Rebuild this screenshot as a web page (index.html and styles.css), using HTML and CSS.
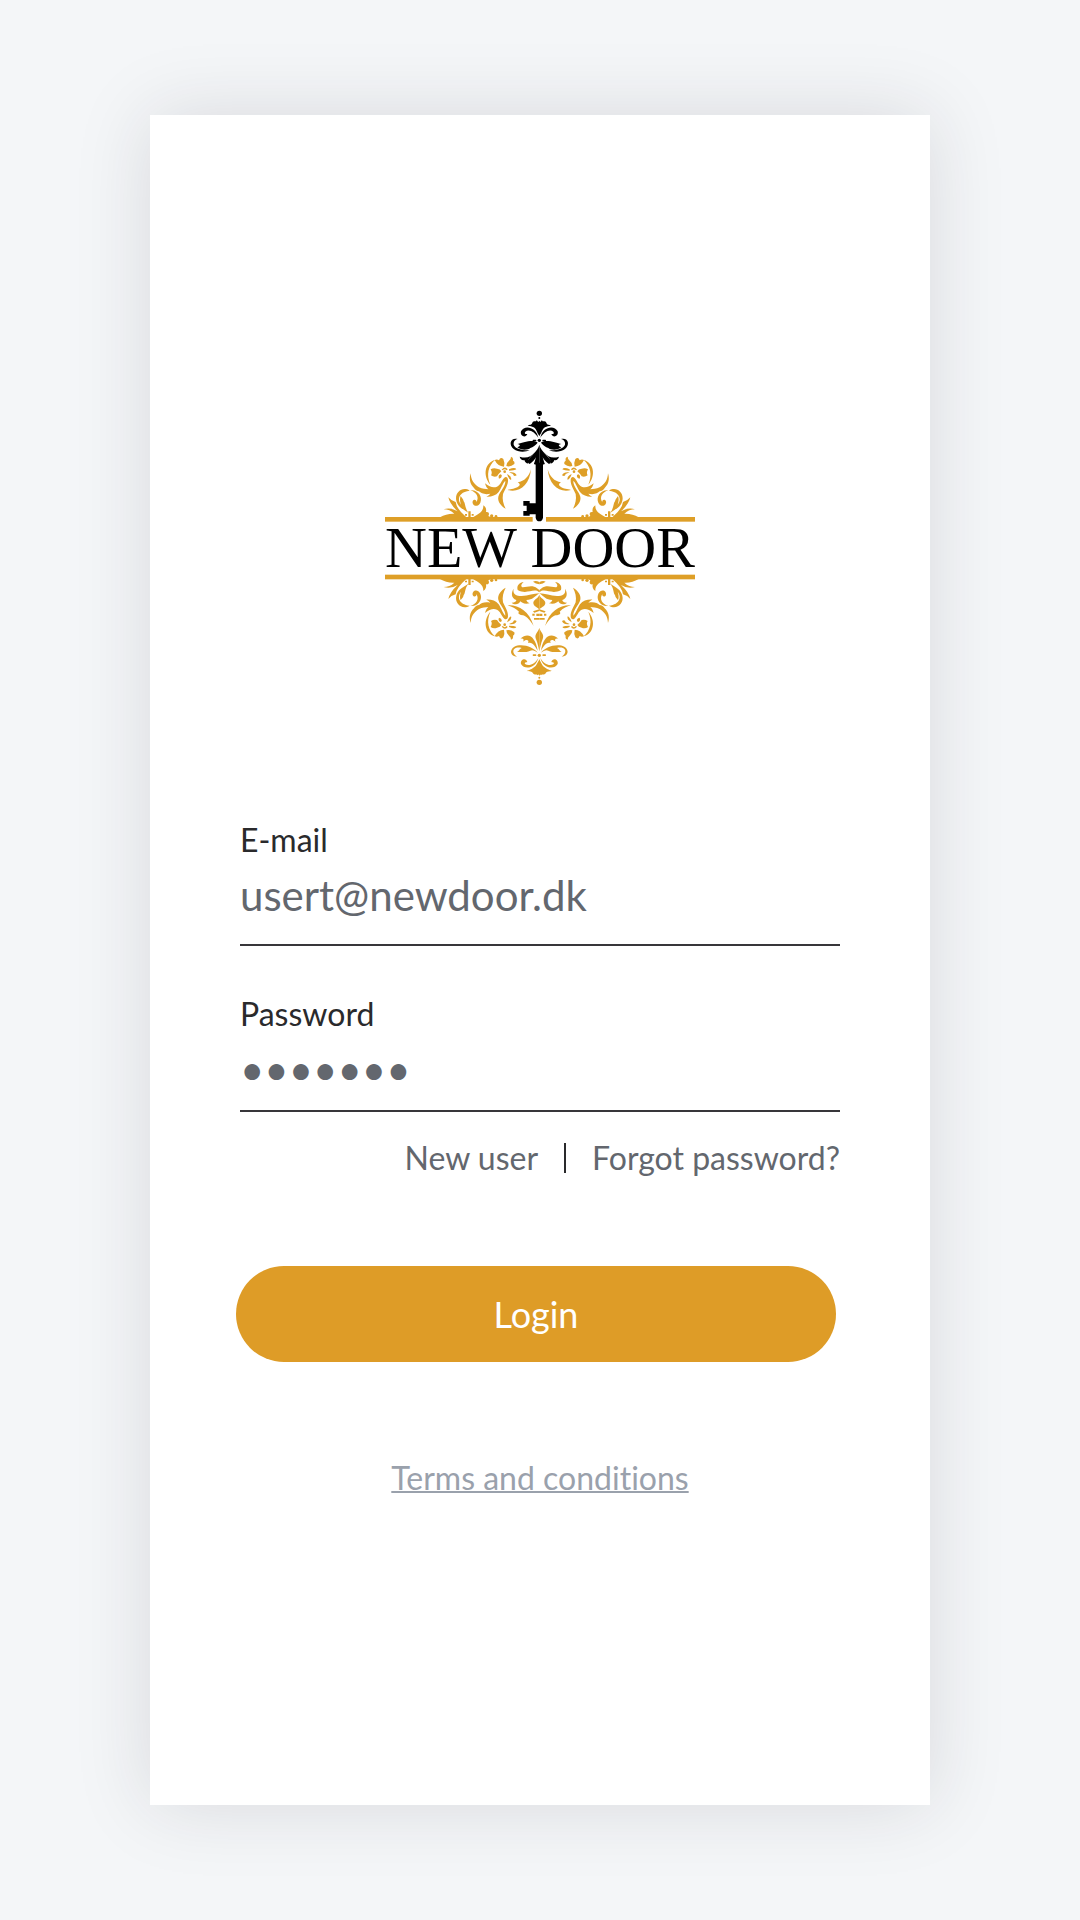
FILE: index.html
```html
<!DOCTYPE html>
<html lang="en">
<head>
    <meta charset="utf-8">
    <meta name="viewport" content="width=device-width, initial-scale=1">
    <title>New Door - Login</title>
    <link rel="stylesheet" href="styles.css">
</head>
<body>
    <main class="card">
        <svg class="logo" viewBox="0 0 990 900" role="img" aria-label="New Door">
            <defs>
                <!-- left half of the corner scrolls and flower -->
                <g id="scroll">
                    <path d="M195 352 Q214 340 238 341 Q224 328 206 328 Q226 321 248 334 Q224 312 220 292 Q228 302 242 306 Q244 326 274 352 Z"/>
                    <path d="M284 272 C262 258 238 278 244 302 C248 320 262 326 280 338 C268 322 272 310 266 304 C265 296 260 294 257 288 C253 298 256 308 258 314 C246 300 250 276 284 272 Z"/>
                    <path d="M286 271 C308 268 324 290 316 308 C308 324 290 318 293 304 C297 296 306 300 304 307 C314 292 304 276 286 271 Z"/>
                    <path d="M280 334h7v18h-7z M270 342h6v5h-6z M290 342h6v5h-6z"/>
                    <path d="M294 352 C310 342 326 336 325 316 C332 320 335 328 333 336 C342 334 344 342 340 348 L348 352 Z"/>
                    <circle cx="350" cy="348" r="5"/>
                    <circle cx="363" cy="349" r="4"/>
                    <path d="M287 220 C288 240 296 252 312 262 C322 267 332 266 340 268 C333 262 332 256 330 250 C344 262 356 264 366 260 C376 256 380 240 388 233 C392 229 399 231 399 240 C400 254 390 268 384 282 C381 298 385 312 392 326 C378 318 367 304 370 290 C374 274 392 260 391 242 C384 248 379 264 371 276 C362 287 348 291 334 290 C341 287 343 284 346 281 C330 285 318 280 312 274 C306 274 300 269 297 264 C284 252 282 236 287 220 Z"/>
                    <path d="M360 180 C330 188 322 226 346 254 C333 224 340 198 360 180 Z"/>
                    <path d="M359 180 Q366 177 372 181 Q376 169 385 177 Q390 188 387 200 Q368 199 359 180 Z"/>
                    <path d="M402 182 Q408 178 408 170 Q416 172 414 182 Q420 184 418 192 Q406 202 394 198 Q394 188 402 182 Z"/>
                    <path d="M347 208 Q356 202 366 206 Q376 207 379 214 Q370 222 366 229 Q356 232 348 226 Q353 219 347 208 Z"/>
                    <path d="M376 223 q-8 4 -4 13 q10 -2 8 -11 z M402 208 Q420 200 424 208 Q418 212 402 212 Z M402 217 Q420 214 425 226 Q416 232 414 222 Z M396 222 Q412 230 408 240 Q400 236 396 222 Z"/>
                    <path d="M380 209 q10 -12 18 -1 l-3 3 q-6 -7 -12 0 z"/>
                    <circle cx="389" cy="215" r="4"/>
                </g>
                <path id="sweep" d="M468 208 C462 230 448 244 428 247 C435 251 436 255 431 259 C420 268 408 266 398 270 C432 280 464 256 468 208 Z"/>
                <!-- left half of the key head -->
                <g id="crest">
                    <path d="M494 62 L494 108 C484 98 486 88 476 82 C470 78 466 78 458 77 C464 72 470 76 472 68 C476 60 484 68 485 60 C490 68 492 66 494 62 Z"/>
                    <path d="M490 114 C484 80 448 74 438 94 C434 108 452 116 457 102 C452 102 447 102 451 95 C462 86 480 96 490 114 Z"/>
                    <path d="M488 128 C478 116 440 128 427 132 C436 134 438 138 427 142 C438 152 460 150 466 144 C474 141 482 136 488 128 Z"/>
                    <path d="M428 117 C406 112 400 134 416 147 C430 158 452 156 464 151 C440 152 412 144 416 128 C418 120 424 118 428 117 Z"/>
                    <rect x="473" y="119" width="11" height="5" rx="2"/>
                </g>
            </defs>

            <g fill="#de9f27">
                <rect x="30" y="351" width="443" height="14"/>
                <rect x="513" y="351" width="447" height="14"/>
                <rect x="30" y="524" width="930" height="14"/>

                <use href="#scroll"/>
                <use href="#sweep"/>
                <use href="#scroll" transform="matrix(-1 0 0 1 986 0)"/>
                <use href="#sweep" transform="matrix(-1 0 0 1 986 0)"/>
                <use href="#scroll" transform="matrix(1 0 0 -1 0 889)"/>
                <use href="#scroll" transform="matrix(-1 0 0 -1 986 889)"/>

                <g id="heart">
                    <path d="M493 577 C476 562 456 586 428 570 C424 556 434 548 446 546 C436 554 438 562 444 562 C458 560 474 554 486 565 L493 570 Z"/>
                    <path d="M474 545 Q482 541 493 546 L493 553 Q482 552 474 545 Z"/>
                    <path d="M416 566 C412 582 424 588 440 588 C460 588 476 580 493 580 C478 590 474 600 454 600 C456 606 460 608 464 610 C448 614 440 608 436 604 C432 614 418 616 410 608 C420 608 424 604 424 600 C408 594 408 578 416 566 Z"/>
                    <path d="M493 584 C490 596 474 598 475 610 C477 622 488 620 493 630 Z"/>
                    <path d="M398 616 C430 614 462 632 476 678 C462 654 450 648 444 646 C430 644 428 640 432 635 C422 624 410 620 398 616 Z"/>
                    <path d="M474 634 L493 628 L493 633 L478 638 Z M484 641 H493 V648 H484 Z M472 641 h7 v6 h-7 z M477 654 H493 V659 H477 Z"/>
                    <path d="M493 684 C488 700 476 702 484 720 C488 730 490 740 493 754 Z"/>
                    <path d="M488 752 C482 714 462 694 436 716 C446 714 448 720 444 725 C454 716 464 720 459 729 C472 724 480 738 488 752 Z"/>
                </g>
                <use href="#heart" transform="matrix(-1 0 0 1 986 0)"/>
                <g id="foot">
                    <path d="M488 758 C478 742 440 728 418 740 C402 750 406 768 426 770 C412 762 412 748 422 744 C428 742 434 742 440 744 C432 748 432 754 426 756 C438 756 454 758 466 752 C472 748 480 752 488 758 Z"/>
                    <path d="M490 774 C482 806 448 810 438 792 C435 778 453 772 457 786 C452 788 448 786 450 792 C462 800 480 792 490 774 Z"/>
                    <path d="M494 778 C486 788 486 798 474 804 C468 808 464 810 456 812 C464 816 470 812 474 820 C480 828 486 820 488 826 C492 820 492 826 494 828 Z"/>
                    <rect x="473" y="763" width="11" height="5" rx="2"/>
                </g>
                <use href="#foot" transform="matrix(-1 0 0 1 986 0)"/>
                <circle cx="493" cy="766" r="5"/>
                <circle cx="493" cy="833" r="3"/>
                <circle cx="493" cy="847" r="8"/>
            </g>

            <g fill="#000">
                <circle cx="493" cy="40" r="8"/>
                <circle cx="493" cy="54" r="3"/>
                <circle cx="493" cy="121" r="5"/>
                <use href="#crest"/>
                <use href="#crest" transform="matrix(-1 0 0 1 986 0)"/>
                <g id="collar">
                    <path d="M493 134 C488 154 466 168 458 182 C457 187 461 190 464 192 C474 186 480 178 483 172 L477 192 L493 196 Z"/>
                    <path d="M480 156 C466 172 454 176 434 170 C436 178 442 182 448 180 C450 188 456 191 460 190 C456 178 468 170 480 156 Z"/>
                </g>
                <use href="#collar" transform="matrix(-1 0 0 1 986 0)"/>
                <path d="M478 188 h30 v5 h-4 v160 q-2 11 -11 11 q-9 0 -11 -11 v-10 h-18 v4 h-19 v-14 h10 v-16 h-10 v-14 h19 v7 h18 v-117 h-4 z"/>
            </g>
            <text class="logo-name" x="30" y="500">NEW DOOR</text>
        </svg>

        <form class="login-form">
            <div class="field">
                <label for="email">E-mail</label>
                <input type="email" id="email" value="usert@newdoor.dk">
            </div>
            <div class="field field-password">
                <label for="password">Password</label>
                <input type="password" id="password" value="newdoor">
            </div>
            <div class="links">
                <a href="#">New user</a>
                <span class="divider"></span>
                <a href="#">Forgot password?</a>
            </div>
            <div class="actions">
                <button type="submit" class="button">Login</button>
            </div>
        </form>

        <a href="#" class="terms">Terms and conditions</a>
    </main>
</body>
</html>
```
FILE: styles.css
```css
* {
    box-sizing: border-box;
    margin: 0;
    padding: 0;
}

body {
    display: flex;
    min-height: 100vh;
    padding: 115px 150px;
    font-family: Lato, sans-serif;
    font-size: 32px;
    line-height: 36px;
    font-variant-ligatures: none;
    background-color: #f4f6f8;
    color: #2a2a2c;
}

.card {
    flex: 1;
    min-width: 0;
    display: flex;
    flex-direction: column;
    align-items: center;
    padding: 285px 0 60px;
    background: #fff;
    box-shadow: 0 0 72px rgba(40, 30, 50, 0.13);
}

.logo {
    width: 330px;
    height: 300px;
    flex-shrink: 0;
}

.logo-name {
    font-family: "Liberation Serif", serif;
    font-size: 174px;
}

.login-form {
    width: 100%;
    padding-top: 122px;
}

.field {
    display: flex;
    flex-direction: column;
    margin: 0 90px 50px;
}

.field input {
    width: 100%;
    height: 88px;
    padding-bottom: 12px;
    border: none;
    border-bottom: 2px solid #38363a;
    outline: none;
    background: none;
    font-family: inherit;
    font-size: 42px;
    color: #63676e;
}

.field-password {
    margin-bottom: 28px;
}

.field-password input {
    height: 80px;
    padding-bottom: 4px;
}

.links {
    display: flex;
    justify-content: flex-end;
    align-items: center;
    gap: 26px;
    margin: 0 90px;
}

.links a {
    color: #63676e;
    text-decoration: none;
}

.divider {
    width: 2px;
    height: 30px;
    background: #2a2a2c;
}

.actions {
    padding: 90px 94px 0 86px;
}

.button {
    width: 100%;
    height: 96px;
    border: none;
    border-radius: 48px;
    background: #de9c27;
    color: #fff;
    font-family: inherit;
    font-size: 36px;
    cursor: pointer;
}

.terms {
    margin-top: 98px;
    color: #9aa1ac;
    text-decoration-thickness: 2px;
}
```
